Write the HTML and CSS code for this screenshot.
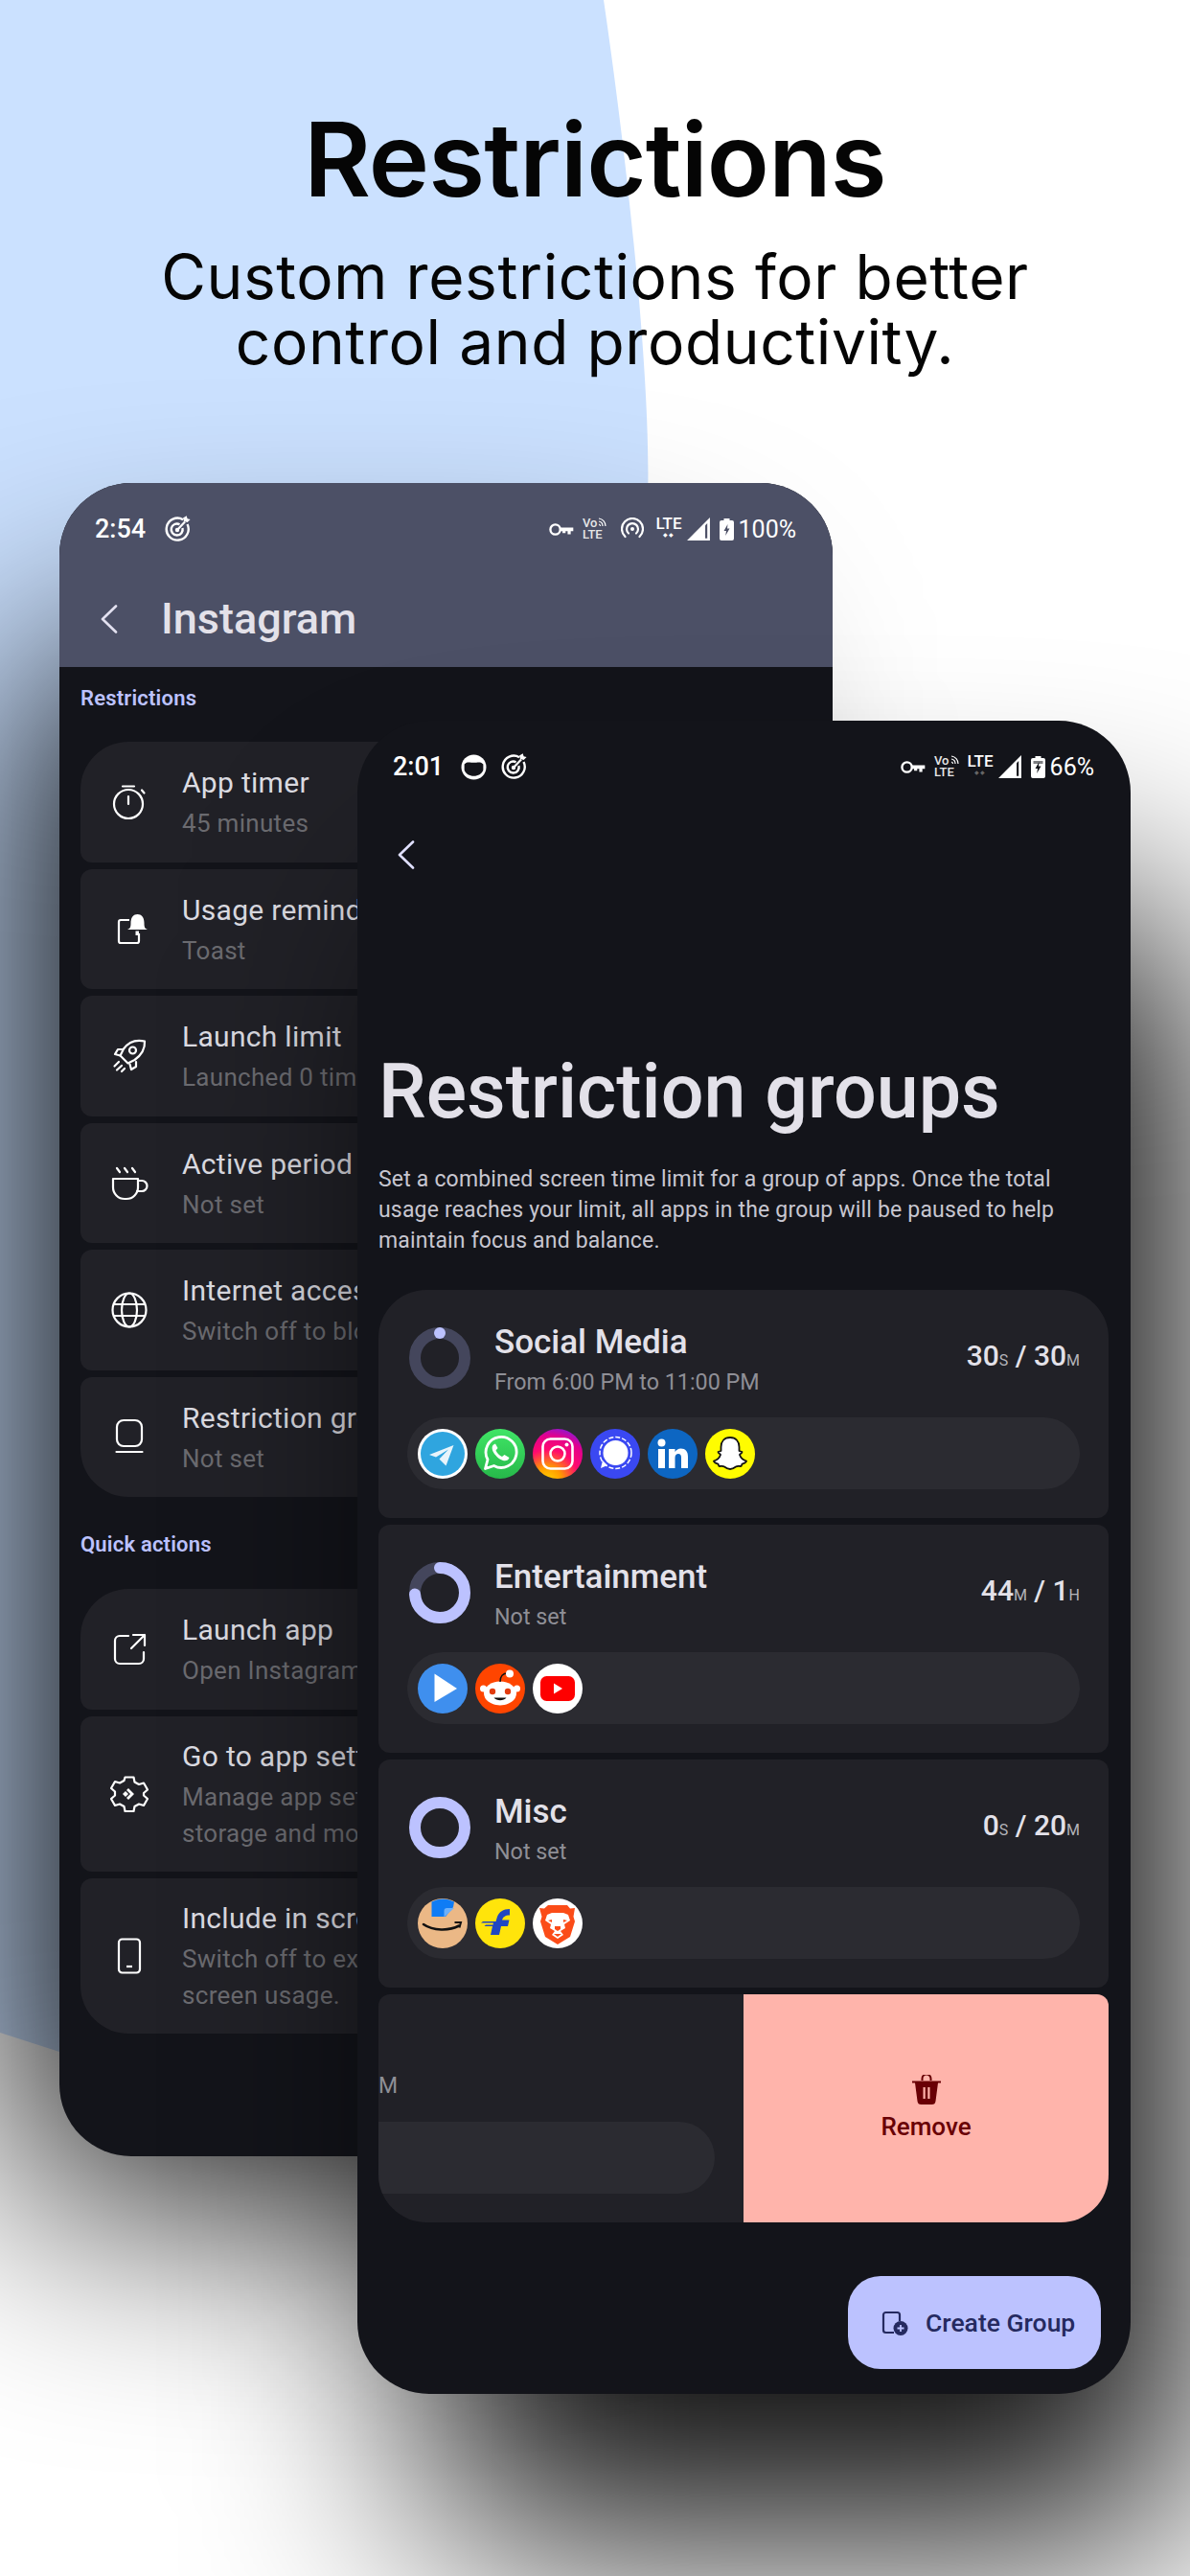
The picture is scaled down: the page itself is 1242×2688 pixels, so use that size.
FILE: index.html
```html
<!DOCTYPE html>
<html lang="en">
<head>
<meta charset="utf-8">
<title>Restrictions</title>
<link rel="stylesheet" href="styles.css">
</head>
<body>
<main class="page">
  <svg class="blob" viewBox="0 0 1242 2688" width="1242" height="2688" aria-hidden="true"><path d="M0 0H630C655 170 680 400 676 520C676 1300 300 2220 62 2141L0 2121Z" fill="#cbe1ff"/></svg>

  <header class="hero">
    <h1 class="hero-title">Restrictions</h1>
    <p class="hero-sub">Custom restrictions for better<br>control and productivity.</p>
  </header>

  <div class="phone-shadow shadow-back"></div>
  <section class="phone phone-back">
    <div class="appbar">
      <div class="status status-back">
        <span class="time">2:54</span>
        <svg class="st-target" viewBox="0 0 28 28"><g fill="none" stroke="#fff" stroke-width="2.4"><path d="M20 4.200A11.500 11.500 0 1 0 24.500 9"/><path d="M16.500 9.200A6 6 0 1 0 19.500 13"/></g><circle cx="14" cy="15" r="2.200" fill="#fff"/><path d="M14 15L22 6.500" stroke="#fff" stroke-width="2.200"/><path d="M20 2.500l1 3.600 3.600 1 3-3-3-.9-.9-3z" fill="#fff"/></svg>
        <span class="spacer"></span>
        <svg class="st-key" viewBox="0 0 24 14"><circle cx="6" cy="7" r="4.800" fill="none" stroke="#fff" stroke-width="2.200"/><path d="M10.500 5.200h13v3.400h-2.500v3h-3v-3h-2v2h-3V8.600h-2.500z" fill="#fff"/></svg>
        <span class="volte"><span>Vo<svg class="mini-wave" viewBox="0 0 9 10"><path d="M1 1a8 8 0 0 1 7 8M1 4a5 5 0 0 1 4 5M1 7a2 2 0 0 1 1.500 2" fill="none" stroke="#fff" stroke-width="1.200"/></svg></span><span>LTE</span></span>
        <svg class="st-hotspot" viewBox="0 0 24 24"><g fill="none" stroke="#fff" stroke-width="2.200" stroke-linecap="round"><path d="M4.500 20A11 11 0 1 1 19.500 20"/><path d="M8 16.500A6 6 0 1 1 16 16.500"/></g><circle cx="12" cy="12" r="2" fill="#fff"/></svg>
        <span class="lte"><span>LTE</span><span class="arrows">◆◆</span></span>
        <svg class="st-signal" viewBox="0 0 24 24"><path d="M23 1V23H1Z" fill="#fff"/><path d="M18.500 8.500V21H20.500V6.500Z" fill="#4c5066"/></svg>
        <svg class="st-battery" viewBox="0 0 15 23"><path d="M4.500 0h6v2H13a2 2 0 0 1 2 2v17a2 2 0 0 1-2 2H2a2 2 0 0 1-2-2V4a2 2 0 0 1 2-2h2.500z" fill="#fff"/><path d="M8.500 6L4.500 13H7l-.8 5 4.300-7.500H8z" fill="#4c5066"/></svg>
        <span class="pct">100%</span>
      </div>
      <div class="appbar-row">
        <svg class="chev" viewBox="0 0 18 30"><path d="M16 1.500L2 15l14 13.500" fill="none" stroke="#e3e1f0" stroke-width="2.600" stroke-linecap="round" stroke-linejoin="round"/></svg>
        <h2 class="appbar-title">Instagram</h2>
      </div>
    </div>

    <div class="back-body">
      <h3 class="section-label">Restrictions</h3>
      <div class="set-list">
        <div class="set-row first">
          <svg class="set-icon" viewBox="0 0 40 40"><g fill="none" stroke="#fff" stroke-width="2.200" stroke-linecap="round"><circle cx="19" cy="22" r="15"/><path d="M13 3.500h12M19 14v8M33 7.500l2.500 3"/></g></svg>
          <div class="set-text"><div class="set-title">App timer</div><div class="set-sub">45 minutes</div></div>
        </div>
        <div class="set-row">
          <svg class="set-icon" viewBox="0 0 40 40"><path d="M20 11H11a2 2 0 0 0-2 2v20a2 2 0 0 0 2 2h17a2 2 0 0 0 2-2v-8" fill="none" stroke="#fff" stroke-width="2.200"/><path d="M18 21c3-1 3.500-3 3.500-7 0-6 3-9 7-9s7 3 7 9c0 4 .5 6 3.500 7z" fill="#fff"/><path d="M26.500 22.500H30V27h-3.500z" fill="#fff"/></svg>
          <div class="set-text"><div class="set-title">Usage reminder</div><div class="set-sub">Toast</div></div>
        </div>
        <div class="set-row">
          <svg class="set-icon" viewBox="0 0 40 40"><g fill="none" stroke="#fff" stroke-width="2.200" stroke-linecap="round" stroke-linejoin="round"><path d="M36 4.500c-9-2-17 1-22 8l-3.500 7 8 8 7-3.500c7-5 11-11 10.500-19.500z"/><circle cx="23.500" cy="14" r="3.500"/><path d="M13 13H8l-3 5 5.500 1.500M27 26v5l-5 3-1.500-5.500M9 26l-4.500 4.500M12 30l-5 4.500M15 33l-3 3"/></g></svg>
          <div class="set-text"><div class="set-title">Launch limit</div><div class="set-sub">Launched 0 times</div></div>
        </div>
        <div class="set-row">
          <svg class="set-icon" viewBox="0 0 40 40"><g fill="none" stroke="#fff" stroke-width="2.200" stroke-linecap="round" stroke-linejoin="round"><path d="M3 16h26v9a12 12 0 0 1-12 12h-2A12 12 0 0 1 3 25z"/><path d="M29 18h4a5.500 5.500 0 0 1 0 11h-5"/><path d="M7 5l3 4M15 5l3 4M23 5l3 4"/></g></svg>
          <div class="set-text"><div class="set-title">Active period</div><div class="set-sub">Not set</div></div>
        </div>
        <div class="set-row">
          <svg class="set-icon" viewBox="0 0 40 40"><g fill="none" stroke="#fff" stroke-width="2.200"><circle cx="20" cy="20" r="17.500"/><ellipse cx="20" cy="20" rx="8" ry="17.500"/><path d="M3.500 14h33M3.500 26h33"/></g></svg>
          <div class="set-text"><div class="set-title">Internet access</div><div class="set-sub">Switch off to block</div></div>
        </div>
        <div class="set-row last">
          <svg class="set-icon" viewBox="0 0 40 40"><rect x="7" y="3" width="26" height="27" rx="7" fill="none" stroke="#fff" stroke-width="2.200"/><path d="M6.500 36h27" stroke="#fff" stroke-width="2.200" stroke-linecap="round"/></svg>
          <div class="set-text"><div class="set-title">Restriction groups</div><div class="set-sub">Not set</div></div>
        </div>
      </div>

      <h3 class="section-label quick">Quick actions</h3>
      <div class="set-list">
        <div class="set-row first">
          <svg class="set-icon" viewBox="0 0 40 40"><g fill="none" stroke="#fff" stroke-width="2.200" stroke-linecap="round" stroke-linejoin="round"><path d="M19 6H10a5 5 0 0 0-5 5v19a5 5 0 0 0 5 5h20a5 5 0 0 0 5-5v-7"/><path d="M24 5h12v11M36 5L22 19"/></g></svg>
          <div class="set-text"><div class="set-title">Launch app</div><div class="set-sub">Open Instagram</div></div>
        </div>
        <div class="set-row">
          <svg class="set-icon" viewBox="0 0 40 40"><path d="M15.500 2.500h9l1 5 4.500 2.500 5-1.500 4 7-4 3.500v2.500l4 3.500-4 7-5-1.500-4.500 2.500-1 5h-9l-1-5-4.500-2.500-5 1.500-4-7 4-3.500V17.500l-4-3.500 4-7 5 1.500 4.500-2.500z" fill="none" stroke="#fff" stroke-width="2.200" stroke-linejoin="round"/><path d="M19 14l6 6-6 6 -2-2 4-4-4-4z" fill="#fff"/><path d="M13 20l3-3 3 3-3 3z" fill="#fff"/></svg>
          <div class="set-text"><div class="set-title">Go to app settings</div><div class="set-sub">Manage app settings,<br>storage and more</div></div>
        </div>
        <div class="set-row last">
          <svg class="set-icon" viewBox="0 0 40 40"><rect x="9" y="2.500" width="22" height="35" rx="3.500" fill="none" stroke="#fff" stroke-width="2.200"/><path d="M17 31h6" stroke="#fff" stroke-width="2.200"/></svg>
          <div class="set-text"><div class="set-title">Include in screen time</div><div class="set-sub">Switch off to exclude<br>screen usage.</div></div>
        </div>
      </div>
    </div>
  </section>

  <div class="phone-shadow shadow-front"></div>
  <section class="phone phone-front">
    <div class="status status-front">
      <span class="time">2:01</span>
      <svg class="st-cat" viewBox="0 0 26 26"><circle cx="13" cy="13" r="12.500" fill="#fff"/><path d="M3.500 10c3-2.500 5-1.500 7-1.500h5c2 0 4-1 7 1.500v6c-1.500 4-5 6-9.500 6s-8-2-9.500-6z" fill="#13141a"/></svg>
      <svg class="st-target" viewBox="0 0 28 28"><g fill="none" stroke="#fff" stroke-width="2.400"><path d="M20 4.200A11.500 11.500 0 1 0 24.500 9"/><path d="M16.500 9.200A6 6 0 1 0 19.500 13"/></g><circle cx="14" cy="15" r="2.200" fill="#fff"/><path d="M14 15L22 6.500" stroke="#fff" stroke-width="2.200"/><path d="M20 2.500l1 3.600 3.600 1 3-3-3-.9-.9-3z" fill="#fff"/></svg>
      <span class="spacer"></span>
      <svg class="st-key" viewBox="0 0 24 14"><circle cx="6" cy="7" r="4.800" fill="none" stroke="#fff" stroke-width="2.200"/><path d="M10.500 5.200h13v3.400h-2.500v3h-3v-3h-2v2h-3V8.600h-2.500z" fill="#fff"/></svg>
      <span class="volte"><span>Vo<svg class="mini-wave" viewBox="0 0 9 10"><path d="M1 1a8 8 0 0 1 7 8M1 4a5 5 0 0 1 4 5M1 7a2 2 0 0 1 1.500 2" fill="none" stroke="#fff" stroke-width="1.200"/></svg></span><span>LTE</span></span>
      <span class="lte"><span>LTE</span><span class="arrows dim">◆◆</span></span>
      <svg class="st-signal" viewBox="0 0 24 24"><path d="M23 1V23H1Z" fill="#fff"/><path d="M18.500 8.500V21H20.500V6.500Z" fill="#13141a"/></svg>
      <svg class="st-battery" viewBox="0 0 15 23"><path d="M4.500 0h6v2H13a2 2 0 0 1 2 2v17a2 2 0 0 1-2 2H2a2 2 0 0 1-2-2V4a2 2 0 0 1 2-2h2.500z" fill="#fff"/><path d="M2.500 5h10v3h-10z" fill="#13141a" opacity=".55"/><path d="M8.500 6L4.500 13H7l-.8 5 4.300-7.500H8z" fill="#13141a"/></svg>
      <span class="pct">66%</span>
    </div>
    <div class="back-row">
      <svg class="chev chev-front" viewBox="0 0 18 30"><path d="M16 1.500L2 15l14 13.500" fill="none" stroke="#e0e0ff" stroke-width="2.600" stroke-linecap="round" stroke-linejoin="round"/></svg>
    </div>
    <div class="front-body">
      <h2 class="big-title">Restriction groups</h2>
      <p class="desc">Set a combined screen time limit for a group of apps. Once the total<br>usage reaches your limit, all apps in the group will be paused to help<br>maintain focus and balance.</p>

      <div class="group-list">
        <article class="group first">
          <div class="group-head">
            <svg class="ring" viewBox="0 0 64 64"><circle cx="32" cy="32" r="26" fill="none" stroke="#44465c" stroke-width="12"/><circle cx="32" cy="6" r="6" fill="#bcc2ff"/></svg>
            <div class="group-text"><div class="group-name">Social Media</div><div class="group-sub">From 6:00 PM to 11:00 PM</div></div>
            <div class="group-usage">30<small>S</small> / 30<small>M</small></div>
          </div>
          <div class="app-pill">
            <svg class="app" viewBox="0 0 52 52"><circle cx="26" cy="26" r="26" fill="#fff"/><circle cx="26" cy="26" r="23" fill="#2fa5df"/><path d="M37.500 17L12 27l7 2.500 13-8-9.500 10L29.500 38.500z" fill="#e8f4fb"/></svg>
            <svg class="app" viewBox="0 0 52 52"><defs><linearGradient id="wa" x1="0" y1="0" x2="0" y2="1"><stop offset="0" stop-color="#40e566"/><stop offset="1" stop-color="#26b84a"/></linearGradient></defs><circle cx="26" cy="26" r="26" fill="url(#wa)"/><path d="M10.500 41.500l2.500-9.500a16 16 0 1 1 6.500 6.500z" fill="none" stroke="#fff" stroke-width="2.800" stroke-linejoin="round"/><path d="M20 16c-2.500 1-3 4-1.500 7.500 2 4 6 8 10.500 9.500 3 1 6-.5 6.500-3l-5-3-2.500 2c-2.500-1-5-3.500-6.500-6.500l2-2.500-2.500-4.500z" fill="#fff"/></svg>
            <svg class="app" viewBox="0 0 52 52"><defs><radialGradient id="ig" cx=".3" cy="1.050" r="1.150"><stop offset="0" stop-color="#ffd500"/><stop offset=".25" stop-color="#ff9a00"/><stop offset=".55" stop-color="#ff0a6e"/><stop offset=".8" stop-color="#e0008f"/><stop offset="1" stop-color="#7a1ee0"/></radialGradient></defs><circle cx="26" cy="26" r="26" fill="url(#ig)"/><rect x="10.500" y="10.500" width="31" height="31" rx="8" fill="none" stroke="#fff" stroke-width="2.600"/><circle cx="26" cy="26" r="7.500" fill="none" stroke="#fff" stroke-width="2.600"/><circle cx="35.500" cy="16.500" r="2" fill="#fff"/></svg>
            <svg class="app" viewBox="0 0 52 52"><circle cx="26" cy="26" r="26" fill="#3a48f2"/><circle cx="26.500" cy="25" r="13" fill="#fff"/><circle cx="26.500" cy="25" r="16.500" fill="none" stroke="#fff" stroke-width="1.500" stroke-dasharray="5 2"/><path d="M11 41l2-8 5 5z" fill="#fff"/></svg>
            <svg class="app" viewBox="0 0 52 52"><circle cx="26" cy="26" r="26" fill="#0d66c2"/><circle cx="14.500" cy="14.500" r="4" fill="#fff"/><rect x="11" y="21" width="7" height="20" fill="#fff"/><path d="M22 21h6.500v3c1.500-2.200 3.500-3.500 6-3.500 5 0 7.500 3 7.500 8.500v12h-7V30c0-2.800-1-4-3-4s-3.500 1.500-3.500 4v11H22z" fill="#fff"/></svg>
            <svg class="app" viewBox="0 0 52 52"><circle cx="26" cy="26" r="26" fill="#fffc00"/><path d="M26 9c-6 0-9.500 4-9.500 10v4l-3 1c0 2 2.500 2 2.500 3-1 3-3.500 5.500-7 6.500 0 2 3 2.500 4.500 3 .5 1.500.5 2.500 1.500 2.500 2 0 3.500-.5 5 .5 2 1.500 3.500 2.500 6 2.500s4-1 6-2.500c1.500-1 3-.5 5-.5 1 0 1-1 1.500-2.500 1.500-.5 4.500-1 4.500-3-3.500-1-6-3.500-7-6.500 0-1 2.500-1 2.500-3l-3-1v-4c0-6-3.500-10-9.500-10z" fill="#fff" stroke="#111" stroke-width="1.800" stroke-linejoin="round"/></svg>
          </div>
        </article>

        <article class="group">
          <div class="group-head">
            <svg class="ring" viewBox="0 0 64 64"><circle cx="32" cy="32" r="26" fill="none" stroke="#44465c" stroke-width="12"/><circle class="ring-arc" cx="32" cy="32" r="26" pathLength="100" stroke-dasharray="74 100" transform="rotate(-90 32 32)"/></svg>
            <div class="group-text"><div class="group-name">Entertainment</div><div class="group-sub">Not set</div></div>
            <div class="group-usage">44<small>M</small> / 1<small>H</small></div>
          </div>
          <div class="app-pill">
            <svg class="app" viewBox="0 0 52 52"><circle cx="26" cy="26" r="26" fill="#3f8fee"/><path d="M17.500 10.500L41 26 17.500 40z" fill="#fff"/></svg>
            <svg class="app" viewBox="0 0 52 52"><circle cx="26" cy="26" r="26" fill="#ff4500"/><ellipse cx="26" cy="31" rx="17" ry="12.500" fill="#fff"/><circle cx="8.500" cy="26" r="3.500" fill="#fff"/><circle cx="43.500" cy="26" r="3.500" fill="#fff"/><circle cx="18" cy="29" r="3.200" fill="#e23c10"/><circle cx="34" cy="29" r="3.200" fill="#e23c10"/><path d="M19.500 35.500c3 3.500 10 3.500 13 0z" fill="#111"/><path d="M26 19c0-6 3-9 8-9" fill="none" stroke="#111" stroke-width="1.400"/><circle cx="36" cy="10.500" r="4" fill="#fff"/></svg>
            <svg class="app" viewBox="0 0 52 52"><circle cx="26" cy="26" r="26" fill="#fff"/><rect x="8" y="13" width="36" height="26" rx="6.500" fill="#fe0000"/><path d="M22 20.500l9 5.500-9 5.500z" fill="#fff"/></svg>
          </div>
        </article>

        <article class="group">
          <div class="group-head">
            <svg class="ring" viewBox="0 0 64 64"><circle cx="32" cy="32" r="26" fill="none" stroke="#bcc2ff" stroke-width="12"/></svg>
            <div class="group-text"><div class="group-name">Misc</div><div class="group-sub">Not set</div></div>
            <div class="group-usage">0<small>S</small> / 20<small>M</small></div>
          </div>
          <div class="app-pill">
            <svg class="app" viewBox="0 0 52 52"><circle cx="26" cy="26" r="26" fill="#ebb886"/><path d="M14.500 3.500A26 26 0 0 1 38 3.500L37 9 29 19H14.500z" fill="#0f7cf5"/><path d="M27.500 19.500V13a3 3 0 0 1 3-3H38z" fill="#6cb0fb"/><path d="M6 27c10 7 27 7 37 1.500" fill="none" stroke="#111" stroke-width="2.600" stroke-linecap="round"/><path d="M38.500 25l6.500 0-1.500 5.500" fill="none" stroke="#111" stroke-width="2"/></svg>
            <svg class="app" viewBox="0 0 52 52"><circle cx="26" cy="26" r="26" fill="#ffe40b"/><path d="M36 11c-7 0-11 3-13 8l-1.500 5H8l-2 1.500h13l-.5 2H11l-1.500 1.500H18l-2 9h9l2-9h7l1.500-6.500H28c1-3 3-5 8-5z" fill="#2046c2"/></svg>
            <svg class="app" viewBox="0 0 52 52"><circle cx="26" cy="26" r="26" fill="#fff"/><path d="M16 7h20l3 3.500 5-.5-1.500 9 1.500 5-5 16-13 8-13-8-5-16 1.500-5L7 10l5 .5z" fill="#fb4c18"/><path d="M15 17l5-2h12l5 2 2 6-6 4 1 4-5 3 3 4-6 4-6-4 3-4-5-3 1-4-6-4z" fill="#fff"/><path d="M23 29h6v3l-3 2-3-2zM20 22l-4 1 4 2zM32 22l4 1-4 2zM22 37h8l-4 3z" fill="#fb4c18"/></svg>
          </div>
        </article>

        <article class="group swiped last">
          <div class="swiped-left">
            <div class="clipped-sub">M</div>
            <div class="app-pill pill-swiped"></div>
          </div>
          <div class="remove">
            <svg class="trash" viewBox="0 0 32 32"><path d="M1 6.500h30v2H28l-2.500 19a4 4 0 0 1-4 3.500h-11a4 4 0 0 1-4-3.500L4 8.500H1z" fill="#690005"/><path d="M11.500 6V4a4.500 4.500 0 0 1 9 0v2" fill="none" stroke="#690005" stroke-width="2"/><path d="M12.500 13h2.200v12h-2.200zM17.300 13h2.200v12h-2.200z" fill="#ffb4ab"/></svg>
            <span class="remove-label">Remove</span>
          </div>
        </article>
      </div>

      <div class="fab-row">
        <button class="fab" type="button">
          <svg class="fab-icon" viewBox="0 0 28 26"><path d="M13 23H4.500A2.500 2.500 0 0 1 2 20.500v-16A2.500 2.500 0 0 1 4.500 2h12A2.500 2.500 0 0 1 19 4.500V11" fill="none" stroke="#252a60" stroke-width="2.200"/><circle cx="20" cy="18.500" r="7.500" fill="#252a60"/><path d="M16.500 18.500h7M20 15v7" stroke="#bcc2ff" stroke-width="1.800"/></svg>
          <span>Create Group</span>
        </button>
      </div>
    </div>
  </section>
</main>
</body>
</html>
```
FILE: styles.css
```css
* { box-sizing: border-box; }
html, body { margin: 0; padding: 0; }
body { background: #fff; font-family: Roboto, "Noto Sans", sans-serif; }
.page { position: relative; width: 1242px; height: 2688px; overflow: hidden; background: #fff; }
.blob { position: absolute; left: 0; top: 0; }

.hero { position: relative; padding-top: 106px; text-align: center; color: #050505; font-family: Inter, "Noto Sans", sans-serif; }
.hero-title { margin: 0; font-size: 107px; line-height: 120px; font-weight: 600; letter-spacing: -.8px; }
.hero-sub { margin: 29px 0 0; font-size: 64px; line-height: 68px; font-weight: 400; letter-spacing: .6px; }

.phone-shadow { position: absolute; border-radius: 80px; filter: blur(120px); }
.shadow-back { left: 15px; top: 680px; width: 700px; height: 1620px; background: rgba(0,0,0,.9); }
.shadow-front { left: 450px; top: 950px; width: 790px; height: 1700px; background: rgba(0,0,0,.95); }

.phone { position: absolute; width: 807px; height: 1746px; border-radius: 75px; background: #13141a; }
.phone-back { left: 62px; top: 504px; }
.phone-front { left: 373px; top: 752px; }

.appbar { height: 192px; background: #4c5066; border-radius: 75px 75px 0 0; }
.status { display: flex; align-items: center; color: #fff; }
.status-back { height: 96px; padding: 0 38px 0 37px; }
.status-front { height: 96px; padding: 0 38px 0 37px; }
.time { font-size: 27px; font-weight: 500; margin-right: 19px; }
.spacer { flex: 1; }
.st-target { width: 28px; height: 28px; }
.st-cat { width: 27px; height: 27px; margin-right: 14px; margin-left: -1px; }
.st-key { width: 26px; height: 15px; margin-right: 9px; }
.volte { display: flex; flex-direction: column; font-size: 13px; line-height: 12px; font-weight: 500; color: #e6e6e6; margin-right: 9px; }
.mini-wave { width: 9px; height: 10px; margin-left: 1px; }
.st-hotspot { width: 24px; height: 24px; margin: 0 12px 0 6px; }
.lte { display: flex; flex-direction: column; align-items: center; font-size: 17px; line-height: 16px; font-weight: 500; margin-right: 4px; margin-top: -4px; }
.arrows { font-size: 6px; line-height: 8px; letter-spacing: 1px; }
.arrows.dim { color: #666; }
.st-signal { width: 26px; height: 26px; margin-right: 9px; }
.st-battery { width: 15px; height: 23px; margin-right: 5px; }
.pct { font-size: 25px; font-weight: 400; }

.appbar-row { display: flex; align-items: center; height: 96px; padding-left: 43px; padding-bottom: 4px; }
.chev { width: 18px; height: 30px; }
.appbar-title { margin: 0 0 0 45px; font-size: 45px; line-height: 50px; font-weight: 500; color: #e3e1e9; }

.back-body { padding: 0 22px; }
.section-label { margin: 0; padding-top: 17px; height: 78px; font-size: 22px; line-height: 32px; font-weight: 600; color: #bcc2ff; letter-spacing: .2px; }
.section-label.quick { padding-top: 34px; height: 96px; line-height: 32px; }
.set-list { display: flex; flex-direction: column; gap: 7px; }
.set-row { display: flex; align-items: center; min-height: 125.500px; padding: 20.500px 0 20.500px 31px; background: #212127; border-radius: 12px; color: #dcdce2; }
.set-row.first { border-radius: 50px 50px 12px 12px; }
.set-row.last { border-radius: 12px 12px 50px 50px; }
.set-icon { width: 40px; height: 40px; flex: none; margin-right: 35px; }
.set-text { white-space: nowrap; padding-top: 1px; }
.set-title { font-size: 30px; line-height: 42px; color: #dcdce2; letter-spacing: .3px; }
.set-sub { margin-top: 2px; font-size: 26px; line-height: 38px; color: #6b6b70; letter-spacing: .3px; }

.back-row { display: flex; align-items: center; height: 88px; padding-left: 42px; }
.front-body { padding: 0 23px 0 22px; }
.big-title { margin: 0; padding: 145px 0 17px; font-size: 79px; line-height: 116px; font-weight: 500; color: #e3e1e9; white-space: nowrap; }
.desc { margin: 0; padding-top: 1px; height: 97px; font-size: 23px; line-height: 32px; color: #c7c6d0; letter-spacing: .18px; white-space: nowrap; }
.group-list { display: flex; flex-direction: column; gap: 7px; margin-top: 35px; }
.group { height: 238px; padding: 39px 30px 0; background: #212127; border-radius: 12px; overflow: hidden; }
.group.first { border-radius: 50px 50px 12px 12px; }
.group-head { display: flex; align-items: center; height: 64px; padding-left: 2px; }
.ring { width: 64px; height: 64px; flex: none; }
.ring-arc { fill: none; stroke: #bcc2ff; stroke-width: 12; stroke-linecap: round; }
.group-text { flex: 1; margin-left: 25px; padding-top: 6px; }
.group-name { font-size: 35px; line-height: 44px; font-weight: 500; color: #e3e1e9; }
.group-sub { font-size: 23.300px; line-height: 38px; color: #8f8f96; }
.group-usage { padding-bottom: 6px; font-size: 30px; font-weight: 500; color: #e3e1e9; white-space: nowrap; }
.group-usage small { font-size: 16px; font-weight: 400; color: #b4b4ba; }
.app-pill { display: flex; align-items: center; gap: 8px; height: 75px; margin-top: 30px; padding-left: 11px; background: #2b2b31; border-radius: 38px; }
.app { width: 52px; height: 52px; flex: none; }

.group.swiped { display: flex; padding: 0; border-radius: 12px 12px 50px 50px; }
.swiped-left { width: 381px; flex: none; }
.clipped-sub { margin: 77px 0 0; height: 38px; font-size: 23px; line-height: 38px; color: #8f8f96; }
.pill-swiped { width: 351px; margin-top: 18px; border-radius: 0 38px 38px 0; }
.remove { flex: 1; display: flex; flex-direction: column; align-items: center; justify-content: center; gap: 6px; background: #ffb4ab; color: #690005; }
.trash { width: 32px; height: 32px; }
.remove-label { font-size: 26px; line-height: 32px; font-weight: 500; }

.fab-row { display: flex; justify-content: flex-end; padding: 56px 8px 0 0; }
.fab { display: flex; align-items: center; gap: 18px; width: 264px; height: 97px; padding: 0 0 0 35px; border: 0; border-radius: 34px; background: #bcc2ff; color: #252a60; font-family: Roboto, sans-serif; font-size: 26.500px; font-weight: 500; }
.fab-icon { width: 28px; height: 26px; flex: none; }
```
